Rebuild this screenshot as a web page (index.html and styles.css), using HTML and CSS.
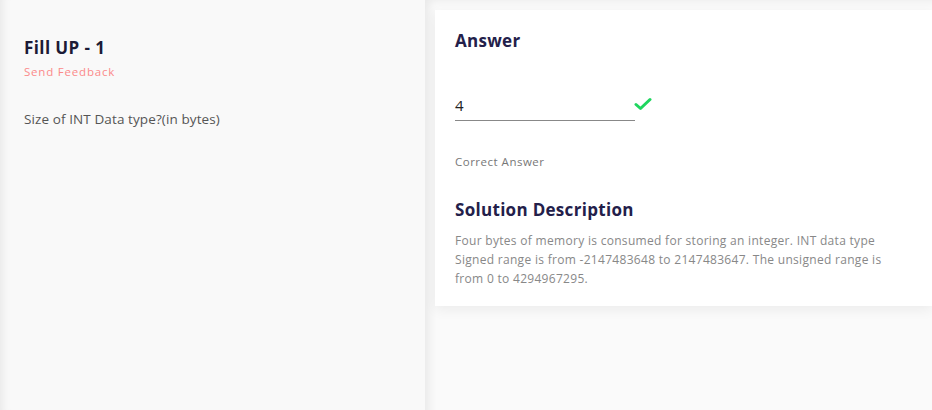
FILE: index.html
```html
<!DOCTYPE html>
<html lang="en">
<head>
    <meta charset="UTF-8">
    <meta name="viewport" content="width=device-width, initial-scale=1.0">
    <title>Fill UP - 1</title>
    <link rel="stylesheet" href="styles.css">
</head>
<body>
    <div class="layout">
        <div class="question-panel">
            <h2 class="question-title">Fill UP - 1</h2>
            <a class="feedback-link" href="#">Send Feedback</a>
            <p class="question-text">Size of INT Data type?(in bytes)</p>
        </div>

        <div class="answer-panel">
            <div class="answer-card">
                <h3 class="card-title">Answer</h3>

                <div class="answer-row">
                    <div class="answer-input">4</div>
                    <svg class="check-icon" width="18" height="14" viewBox="0 0 18 14">
                        <path d="M2 7.5 L6.5 11.5 L16 2.5" fill="none" stroke="#1fd65f" stroke-width="3" stroke-linecap="round" stroke-linejoin="round"/>
                    </svg>
                </div>

                <div class="answer-status">Correct Answer</div>

                <h3 class="card-title solution-title">Solution Description</h3>
                <p class="solution-text">Four bytes of memory is consumed for storing an integer. INT data type Signed range is from -2147483648 to 2147483647. The unsigned range is from 0 to 4294967295.</p>
            </div>
        </div>
    </div>
</body>
</html>
```

FILE: styles.css
```css
body {
    margin: 0;
    font-family: "Open Sans", "Noto Sans", sans-serif;
    background-color: #fafafa;
}
.layout {
    display: flex;
    height: 410px;
}
.question-panel {
    width: 425px;
    box-sizing: border-box;
    padding: 37px 24px;
    background-color: #f9f9f9;
    box-shadow: inset 10px 0 10px -8px rgba(0, 0, 0, 0.08);
}
.question-title {
    margin: 0;
    font-size: 17px;
    line-height: 22px;
    font-weight: 700;
    color: #1c1b36;
    letter-spacing: 0.4px;
}
.feedback-link {
    display: block;
    margin-top: 5px;
    font-size: 11.5px;
    line-height: 16px;
    color: #fb8a8a;
    text-decoration: none;
    letter-spacing: 0.8px;
}
.question-text {
    margin: 29px 0 0;
    font-size: 13.5px;
    line-height: 20px;
    color: #555;
    letter-spacing: 0.1px;
}
.answer-panel {
    flex: 1;
    padding: 10px 0 0 10px;
    background-color: #fafafa;
    box-shadow: inset 10px 6px 10px -6px rgba(0, 0, 0, 0.07);
}
.answer-card {
    background-color: #ffffff;
    padding: 20px 20px 20px;
    height: 296px;
    box-sizing: border-box;
    box-shadow: 0 4px 12px rgba(0, 0, 0, 0.06);
}
.card-title {
    margin: 0;
    font-size: 17px;
    line-height: 22px;
    font-weight: 700;
    color: #23204a;
    letter-spacing: 0.3px;
}
.answer-row {
    display: flex;
    align-items: center;
    margin-top: 43px;
}
.answer-input {
    width: 180px;
    padding: 0 0 5px;
    font-size: 15px;
    line-height: 20px;
    color: #222;
    border-bottom: 1px solid #888;
}
.check-icon {
    margin-left: -1px;
    margin-top: -8px;
}
.answer-status {
    margin-top: 33px;
    font-size: 11.5px;
    line-height: 16px;
    color: #777;
    letter-spacing: 0.5px;
}
.solution-title {
    margin-top: 29px;
}
.solution-text {
    margin: 10px 0 0;
    font-size: 12px;
    line-height: 19px;
    color: #888;
    letter-spacing: 0.3px;
    max-width: 445px;
}
```
